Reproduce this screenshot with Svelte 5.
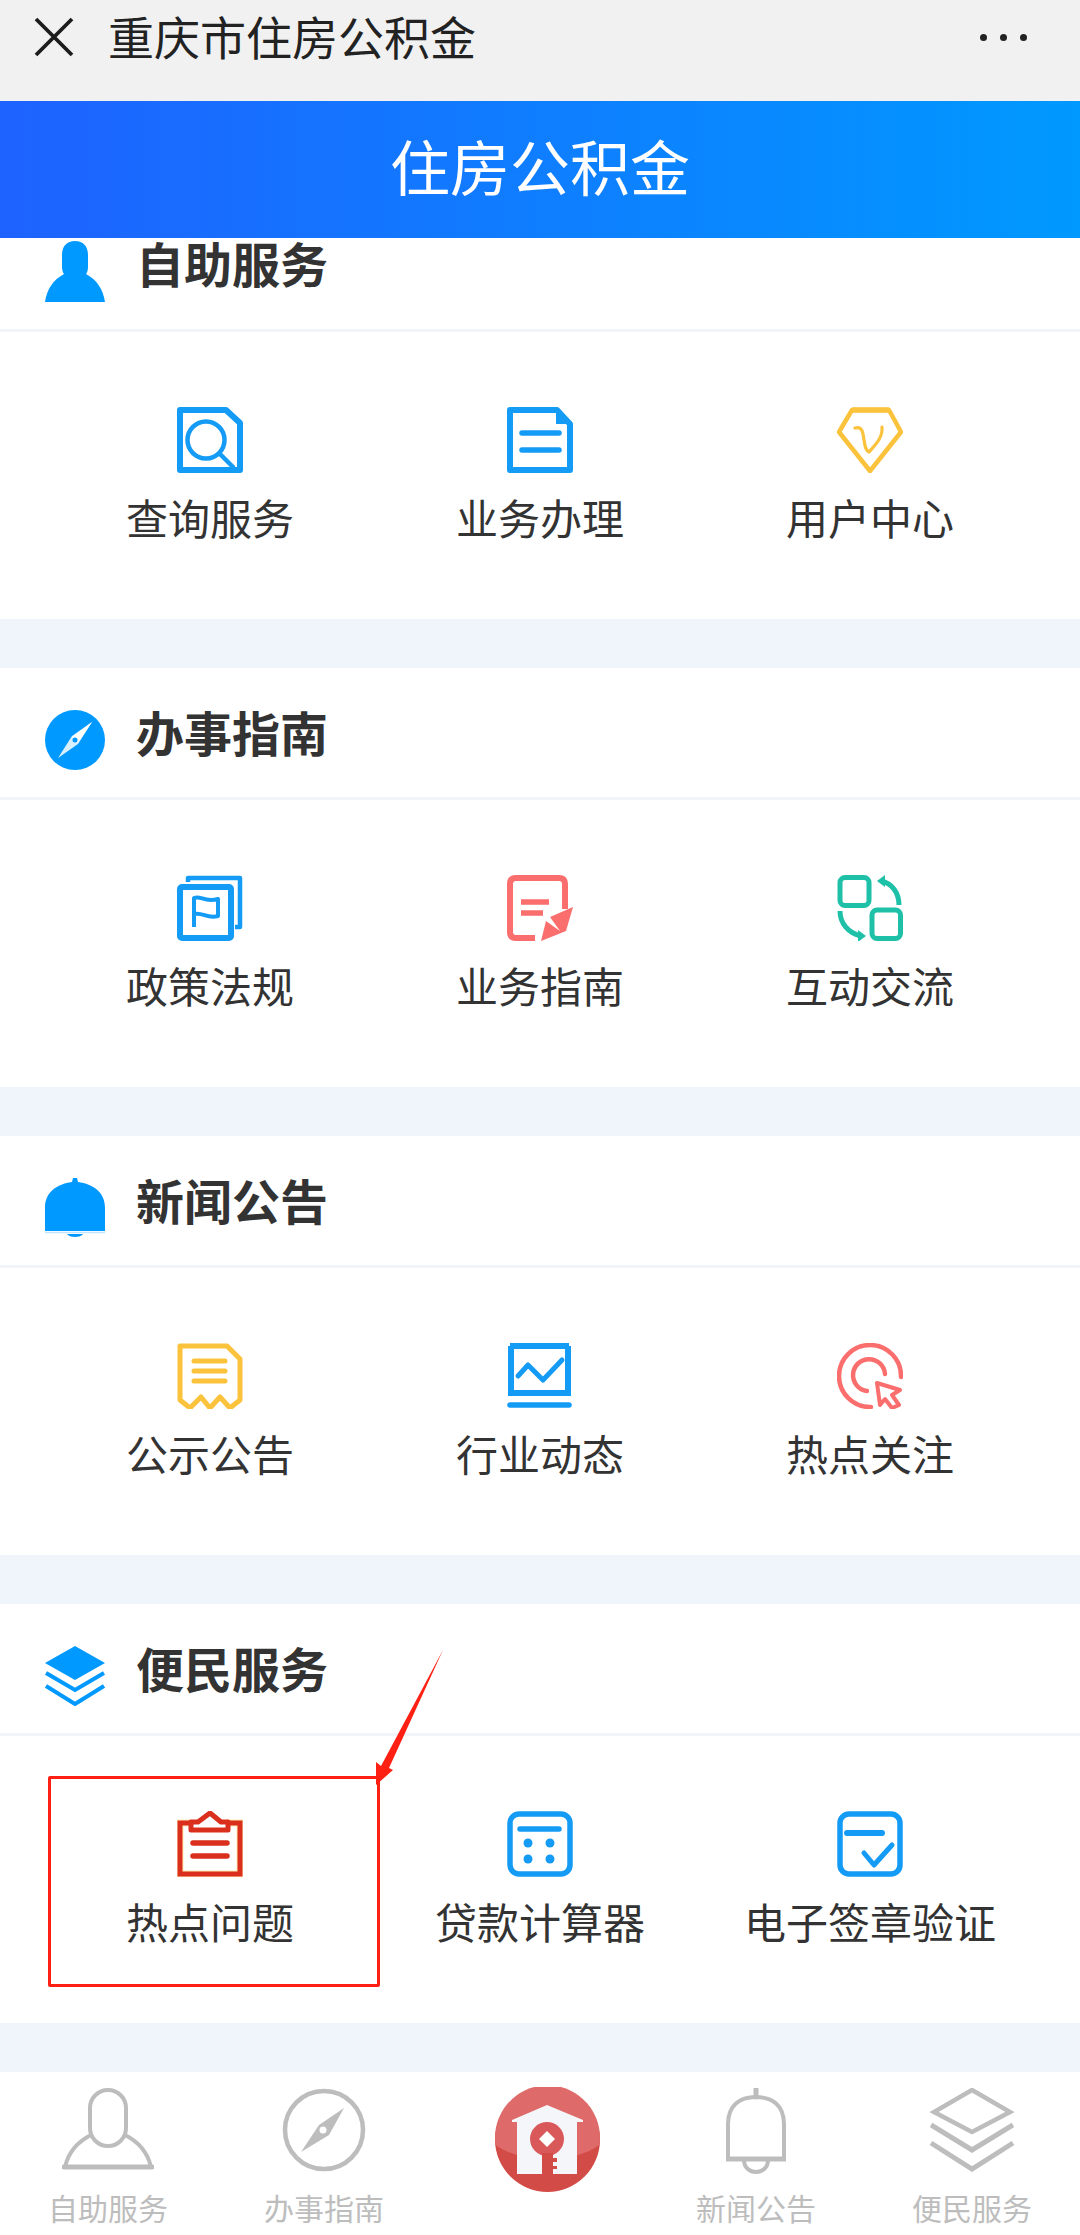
<script>
  const sections = [
    {
      title: '自助服务',
      icon: headPerson,
      items: [
        { label: '查询服务', icon: iconQuery },
        { label: '业务办理', icon: iconDoc },
        { label: '用户中心', icon: iconGem }
      ]
    },
    {
      title: '办事指南',
      icon: headCompass,
      items: [
        { label: '政策法规', icon: iconPolicy },
        { label: '业务指南', icon: iconGuide },
        { label: '互动交流', icon: iconSwap }
      ]
    },
    {
      title: '新闻公告',
      icon: headBell,
      items: [
        { label: '公示公告', icon: iconNotice },
        { label: '行业动态', icon: iconTrend },
        { label: '热点关注', icon: iconTarget }
      ]
    },
    {
      title: '便民服务',
      icon: headLayers,
      marked: true,
      items: [
        { label: '热点问题', icon: iconClip },
        { label: '贷款计算器', icon: iconCalc },
        { label: '电子签章验证', icon: iconCheck }
      ]
    }
  ];
</script>

{#snippet headPerson()}
  <svg width="60" height="61" viewBox="0 0 60 61">
    <path d="M17 14 C17 5 22 0 30 0 C38 0 43 5 43 14 V26 C43 29 42 32 41 33 C52 39 58 48 60 61 H0 C2 48 8 39 19 33 C18 32 17 29 17 26 Z" fill="#0099ff" />
  </svg>
{/snippet}

{#snippet headCompass()}
  <svg width="60" height="60" viewBox="0 0 60 60">
    <circle cx="30" cy="30" r="30" fill="#0099ff" />
    <path d="M47 12 L33 34 L13 48 L27 26 Z" fill="#d8efff" />
    <path d="M47 12 L33 33 L27 27 Z" fill="#fff" />
    <circle cx="30" cy="30" r="2.5" fill="#0099ff" />
  </svg>
{/snippet}

{#snippet headBell()}
  <svg width="60" height="60" viewBox="0 0 60 60">
    <path d="M0 53 V30 C0 14 12 6 27 4 L28 0 H32 L33 4 C48 6 60 14 60 30 V53 Z" fill="#0099ff" />
    <path d="M0 54.5 H60" stroke="#bfe5ff" stroke-width="1.5" />
    <path d="M22 56 H38 C36 60 24 60 22 56 Z" fill="#0099ff" />
  </svg>
{/snippet}

{#snippet headLayers()}
  <svg width="60" height="60" viewBox="0 0 60 60">
    <path d="M30 0 L60 17 L30 34 L0 17 Z" fill="#0099ff" />
    <path d="M1 27 L30 44 L59 27" fill="none" stroke="#0099ff" stroke-width="4" />
    <path d="M1 40 L30 58 L59 40" fill="none" stroke="#0099ff" stroke-width="4" />
  </svg>
{/snippet}

{#snippet iconQuery()}
  <svg width="66" height="66" viewBox="0 0 66 66" fill="none" stroke="#149bf5">
    <path d="M3 3 H49 L63 16 V63 H3 Z" stroke-width="6" stroke-linejoin="round" />
    <circle cx="29" cy="33" r="18.5" stroke-width="4.5" />
    <path d="M43 47 L56 60" stroke-width="4.5" stroke-linecap="round" />
  </svg>
{/snippet}

{#snippet iconDoc()}
  <svg width="66" height="66" viewBox="0 0 66 66" fill="none" stroke="#149bf5">
    <path d="M3 3 H50 L63 17 V63 H3 Z" stroke-width="6" stroke-linejoin="round" />
    <path d="M49 3 V17 H63 Z" fill="#149bf5" stroke="none" />
    <path d="M15 26 H52 M15 43 H52" stroke-width="5.5" stroke-linecap="round" />
  </svg>
{/snippet}

{#snippet iconGem()}
  <svg width="66" height="66" viewBox="0 0 66 66" fill="none" stroke="#fbc23c">
    <path d="M15 3 H52 L64 25 L33 64 L2 25 Z" stroke-width="4.5" stroke-linejoin="round" />
    <path d="M15 3 H52" stroke-width="5.5" />
    <path d="M18 21 C25 19 26 25 27 33 C28 40 29 44 32 45 C38 38 46 31 45 20" stroke-width="3.2" stroke-linecap="round" />
  </svg>
{/snippet}

{#snippet iconPolicy()}
  <svg width="66" height="66" viewBox="0 0 66 66" fill="none" stroke="#149bf5">
    <path d="M11 7 V3 H63 V52 H58" stroke-width="4.5" stroke-linejoin="round" />
    <rect x="3" y="12" width="51" height="51" rx="2" stroke-width="6" />
    <path d="M17 52 V23 C24 20 27 28 41 24 V41 C30 44 26 37 17 39" stroke-width="4" stroke-linejoin="round" />
  </svg>
{/snippet}

{#snippet iconGuide()}
  <svg width="66" height="66" viewBox="0 0 66 66" fill="none" stroke="#fb6e6e">
    <path d="M28 63 H9 Q3 63 3 57 V9 Q3 3 9 3 H52 Q58 3 58 9 V34" stroke-width="6" />
    <path d="M14 27 H42 M14 38 H36" stroke-width="5.5" />
    <path d="M66 32 L59 56 L34 66 L39 46 L53 56 L43 42 Z" fill="#fb6e6e" stroke="none" />
  </svg>
{/snippet}

{#snippet iconSwap()}
  <svg width="66" height="66" viewBox="0 0 66 66" fill="none" stroke="#1fc0a8" stroke-width="5">
    <rect x="3" y="2.5" width="29" height="28" rx="5" />
    <rect x="35" y="35" width="28.5" height="28.5" rx="5" />
    <path d="M44 6 C55 8 62 18 62 30" />
    <path d="M40 6 L48 0 V12 Z" fill="#1fc0a8" stroke="none" />
    <path d="M3 36 C3 48 11 58 24 61" />
    <path d="M29 61 L21 67 V55 Z" fill="#1fc0a8" stroke="none" />
  </svg>
{/snippet}

{#snippet iconNotice()}
  <svg width="66" height="66" viewBox="0 0 66 66" fill="none" stroke="#fbc23c">
    <path d="M3 3 H50 L63 16 V57 L53 65 L43 54 L33 65 L24 54 L13 65 L3 57 Z" stroke-width="5" stroke-linejoin="round" />
    <path d="M17 18 H48 M17 28 H48 M17 38 H48" stroke-width="5" stroke-linecap="round" />
  </svg>
{/snippet}

{#snippet iconTrend()}
  <svg width="66" height="66" viewBox="0 0 66 66" fill="none" stroke="#149bf5">
    <path d="M3 3 H62" stroke-width="6" />
    <path d="M4 3 V50 H61 V3" stroke-width="6" />
    <path d="M11 33 L21 22 L36 37 L55 17" stroke-width="5" stroke-linejoin="round" stroke-linecap="round" />
    <path d="M3 62 H62" stroke-width="5.5" stroke-linecap="round" />
  </svg>
{/snippet}

{#snippet iconTarget()}
  <svg width="66" height="66" viewBox="0 0 66 66" fill="none" stroke="#fb6e6e" stroke-width="4.5">
    <path d="M34 64 A31 31 0 1 1 64 34" stroke-linecap="round" />
    <path d="M30 48 A16 16 0 1 1 48 31" stroke-linecap="round" />
    <path d="M40 40 L63 47 L55 52 L62 62 L55 65 L48 56 L43 62 Z" stroke-width="4" stroke-linejoin="round" />
  </svg>
{/snippet}

{#snippet iconClip()}
  <svg width="66" height="66" viewBox="0 0 66 66" fill="none" stroke="#db2f1d">
    <path d="M15 12 H3 V63 H63 V12 H50" stroke-width="7" stroke="#fde9b0" />
    <path d="M15 12 H3 V63 H63 V12 H50" stroke-width="5" />
    <path d="M14 19 V11 H21 L33 2 L44 11 H51 V19 Z" stroke-width="5" stroke-linejoin="round" />
    <path d="M16 32 H50 M16 45 H50" stroke-width="5.5" stroke-linecap="round" />
  </svg>
{/snippet}

{#snippet iconCalc()}
  <svg width="66" height="66" viewBox="0 0 66 66" fill="none" stroke="#149bf5">
    <rect x="3" y="3" width="60" height="60" rx="9" stroke-width="5.5" />
    <path d="M13 18 H52" stroke-width="5.5" stroke-linecap="round" />
    <g fill="#149bf5" stroke="none">
      <circle cx="21" cy="32" r="4.5" />
      <circle cx="43" cy="32" r="4.5" />
      <circle cx="21" cy="48" r="4.5" />
      <circle cx="43" cy="48" r="4.5" />
    </g>
  </svg>
{/snippet}

{#snippet iconCheck()}
  <svg width="66" height="66" viewBox="0 0 66 66" fill="none" stroke="#149bf5">
    <rect x="3" y="3" width="60" height="60" rx="9" stroke-width="5.5" />
    <path d="M10 22 H45" stroke-width="6" stroke-linecap="round" />
    <path d="M27 42 L37 54 L55 34" stroke-width="5" stroke-linecap="round" stroke-linejoin="round" />
  </svg>
{/snippet}

<div class="page">
  <div class="wx-bar">
    <svg class="close" width="40" height="40" viewBox="0 0 40 40">
      <path d="M2 2 L38 38 M38 2 L2 38" stroke="#1c1c1c" stroke-width="3.8" />
    </svg>
    <span class="wx-title">重庆市住房公积金</span>
    <span class="dots"><i></i><i></i><i></i></span>
  </div>

  <div class="banner">住房公积金</div>

  {#each sections as section, i}
    <section class="block" class:first={i === 0}>
      <div class="head">
        {@render section.icon()}
        <h2>{section.title}</h2>
      </div>
      <div class="grid">
        {#each section.items as item, j}
          <div class="cell">
            {@render item.icon()}
            <div class="label">{item.label}</div>
            {#if section.marked && j === 0}
              <div class="mark"></div>
            {/if}
          </div>
        {/each}
      </div>
      {#if section.marked}
        <svg class="arrow" width="80" height="140" viewBox="0 0 80 140">
          <path d="M74 0 L20 118 L24 120 L7 135 L7 112 L12 116 Z" fill="#ff2014" />
        </svg>
      {/if}
    </section>
  {/each}

  <nav class="tabs">
    <div class="tab">
      <svg width="92" height="82" viewBox="0 0 92 82" fill="none" stroke="#bdbdbd" stroke-width="4">
        <rect x="28" y="2" width="36" height="56" rx="18" />
        <path d="M29 47 C15 54 6 66 3 79 M63 47 C77 54 86 66 89 79" />
        <path d="M2 79 H90" stroke-width="5" stroke-linecap="round" />
      </svg>
      <span>自助服务</span>
    </div>
    <div class="tab">
      <svg width="84" height="84" viewBox="0 0 84 84" fill="none" stroke="#bdbdbd" stroke-width="4.5">
        <circle cx="42" cy="42" r="39" />
        <path d="M62 20 L47 47 L19 64 L37 37 Z" fill="#bdbdbd" stroke="none" />
        <circle cx="41" cy="42" r="3.5" fill="#fff" stroke="none" />
      </svg>
      <span>办事指南</span>
    </div>
    <div class="tab logo-tab">
      <svg width="105" height="105" viewBox="0 0 105 105">
        <circle cx="52.5" cy="52.5" r="52.5" fill="#d24b46" />
        <path d="M0.5 58 A52.5 52.5 0 1 1 104.5 58 C90 68 72 72 52.5 72 C33 72 15 68 0.5 58 Z" fill="#de6a69" />
        <path d="M52 18 L88 33 L88 35 L82 35 V87 H22 V35 L17 35 L17 33 Z" fill="#f4f6fa" />
        <circle cx="52" cy="52" r="17" fill="#d9585a" />
        <path d="M52 44 L60 52 L52 60 L44 52 Z" fill="#fff" />
        <path d="M47 66 H58 V71 H62 V75 H58 V79 H62 V82 H58 V87 H47 Z" fill="#d24b46" />
      </svg>
    </div>
    <div class="tab">
      <svg width="62" height="86" viewBox="0 0 62 86" fill="none" stroke="#bdbdbd" stroke-width="4">
        <path d="M3 70 V36 C3 18 14 9 31 9 C48 9 59 18 59 36 V70" />
        <path d="M31 1 V9" stroke-width="5" stroke-linecap="round" />
        <path d="M1 71 H61" stroke-width="5" />
        <path d="M19 72 C19 88 43 88 43 72" />
      </svg>
      <span>新闻公告</span>
    </div>
    <div class="tab">
      <svg width="84" height="84" viewBox="0 0 84 84" fill="none" stroke="#bdbdbd">
        <path d="M42 2 L80 24 L42 44 L4 24 Z" stroke-width="4.5" />
        <path d="M1 37 L42 62 L83 37" stroke-width="5" />
        <path d="M1 55 L42 81 L83 55" stroke-width="5" />
      </svg>
      <span>便民服务</span>
    </div>
  </nav>
</div>

<style>
  :global(body) {
    margin: 0;
    background: #f0f5fc;
  }

  .page {
    width: 1080px;
    font-family: "Noto Sans CJK SC", "Noto Sans", sans-serif;
    color: #333;
  }

  .wx-bar {
    height: 101px;
    background: #f1f1f1;
    display: flex;
    align-items: flex-start;
    box-sizing: border-box;
    padding: 17px 50px 0 34px;
  }

  .wx-title {
    margin-left: 34px;
    margin-top: -3px;
    font-size: 46px;
    line-height: 42px;
    color: #222;
  }

  .dots {
    margin-left: auto;
    margin-top: 17px;
    margin-right: 3px;
    display: flex;
    gap: 13px;
  }

  .dots i {
    width: 7px;
    height: 7px;
    border-radius: 50%;
    background: #222;
  }

  .banner {
    height: 137px;
    line-height: 128px;
    text-align: center;
    font-size: 60px;
    color: #fff;
    background: linear-gradient(90deg, #1e62ff, #0099ff);
  }

  .block {
    position: relative;
    background: #fff;
    margin-bottom: 49px;
  }

  .head {
    height: 129px;
    box-sizing: border-box;
    padding: 42px 0 0 45px;
    display: flex;
    align-items: flex-start;
    gap: 31px;
  }

  .first .head {
    height: 91px;
    padding-top: 3px;
  }

  .head h2 {
    margin: -11px 0 0;
    font-size: 48px;
    line-height: 64px;
    font-weight: 700;
    color: #333;
  }

  .grid {
    border-top: 3px solid #f1f5f9;
    height: 287px;
    padding: 0 45px;
    display: grid;
    grid-template-columns: repeat(3, 330px);
  }

  .cell {
    position: relative;
    padding-top: 75px;
    display: flex;
    flex-direction: column;
    align-items: center;
  }

  .label {
    margin-top: 14px;
    font-size: 42px;
    line-height: 60px;
    white-space: nowrap;
  }

  .mark {
    position: absolute;
    left: 3px;
    top: 40px;
    width: 332px;
    height: 211px;
    box-sizing: border-box;
    border: 3px solid #ff2014;
    border-radius: 2px;
  }

  .arrow {
    position: absolute;
    left: 369px;
    top: 46px;
  }

  .tabs {
    height: 163px;
    background: #fff;
    display: grid;
    grid-template-columns: repeat(5, 216px);
  }

  .tab {
    display: flex;
    flex-direction: column;
    align-items: center;
    height: 163px;
    padding-top: 16px;
    box-sizing: border-box;
    position: relative;
  }

  .tab span {
    position: absolute;
    top: 113px;
    font-size: 30px;
    line-height: 44px;
    color: #bdbdbd;
    white-space: nowrap;
  }

  .logo-tab svg {
    margin-left: 15px;
    margin-top: -1px;
  }
</style>
